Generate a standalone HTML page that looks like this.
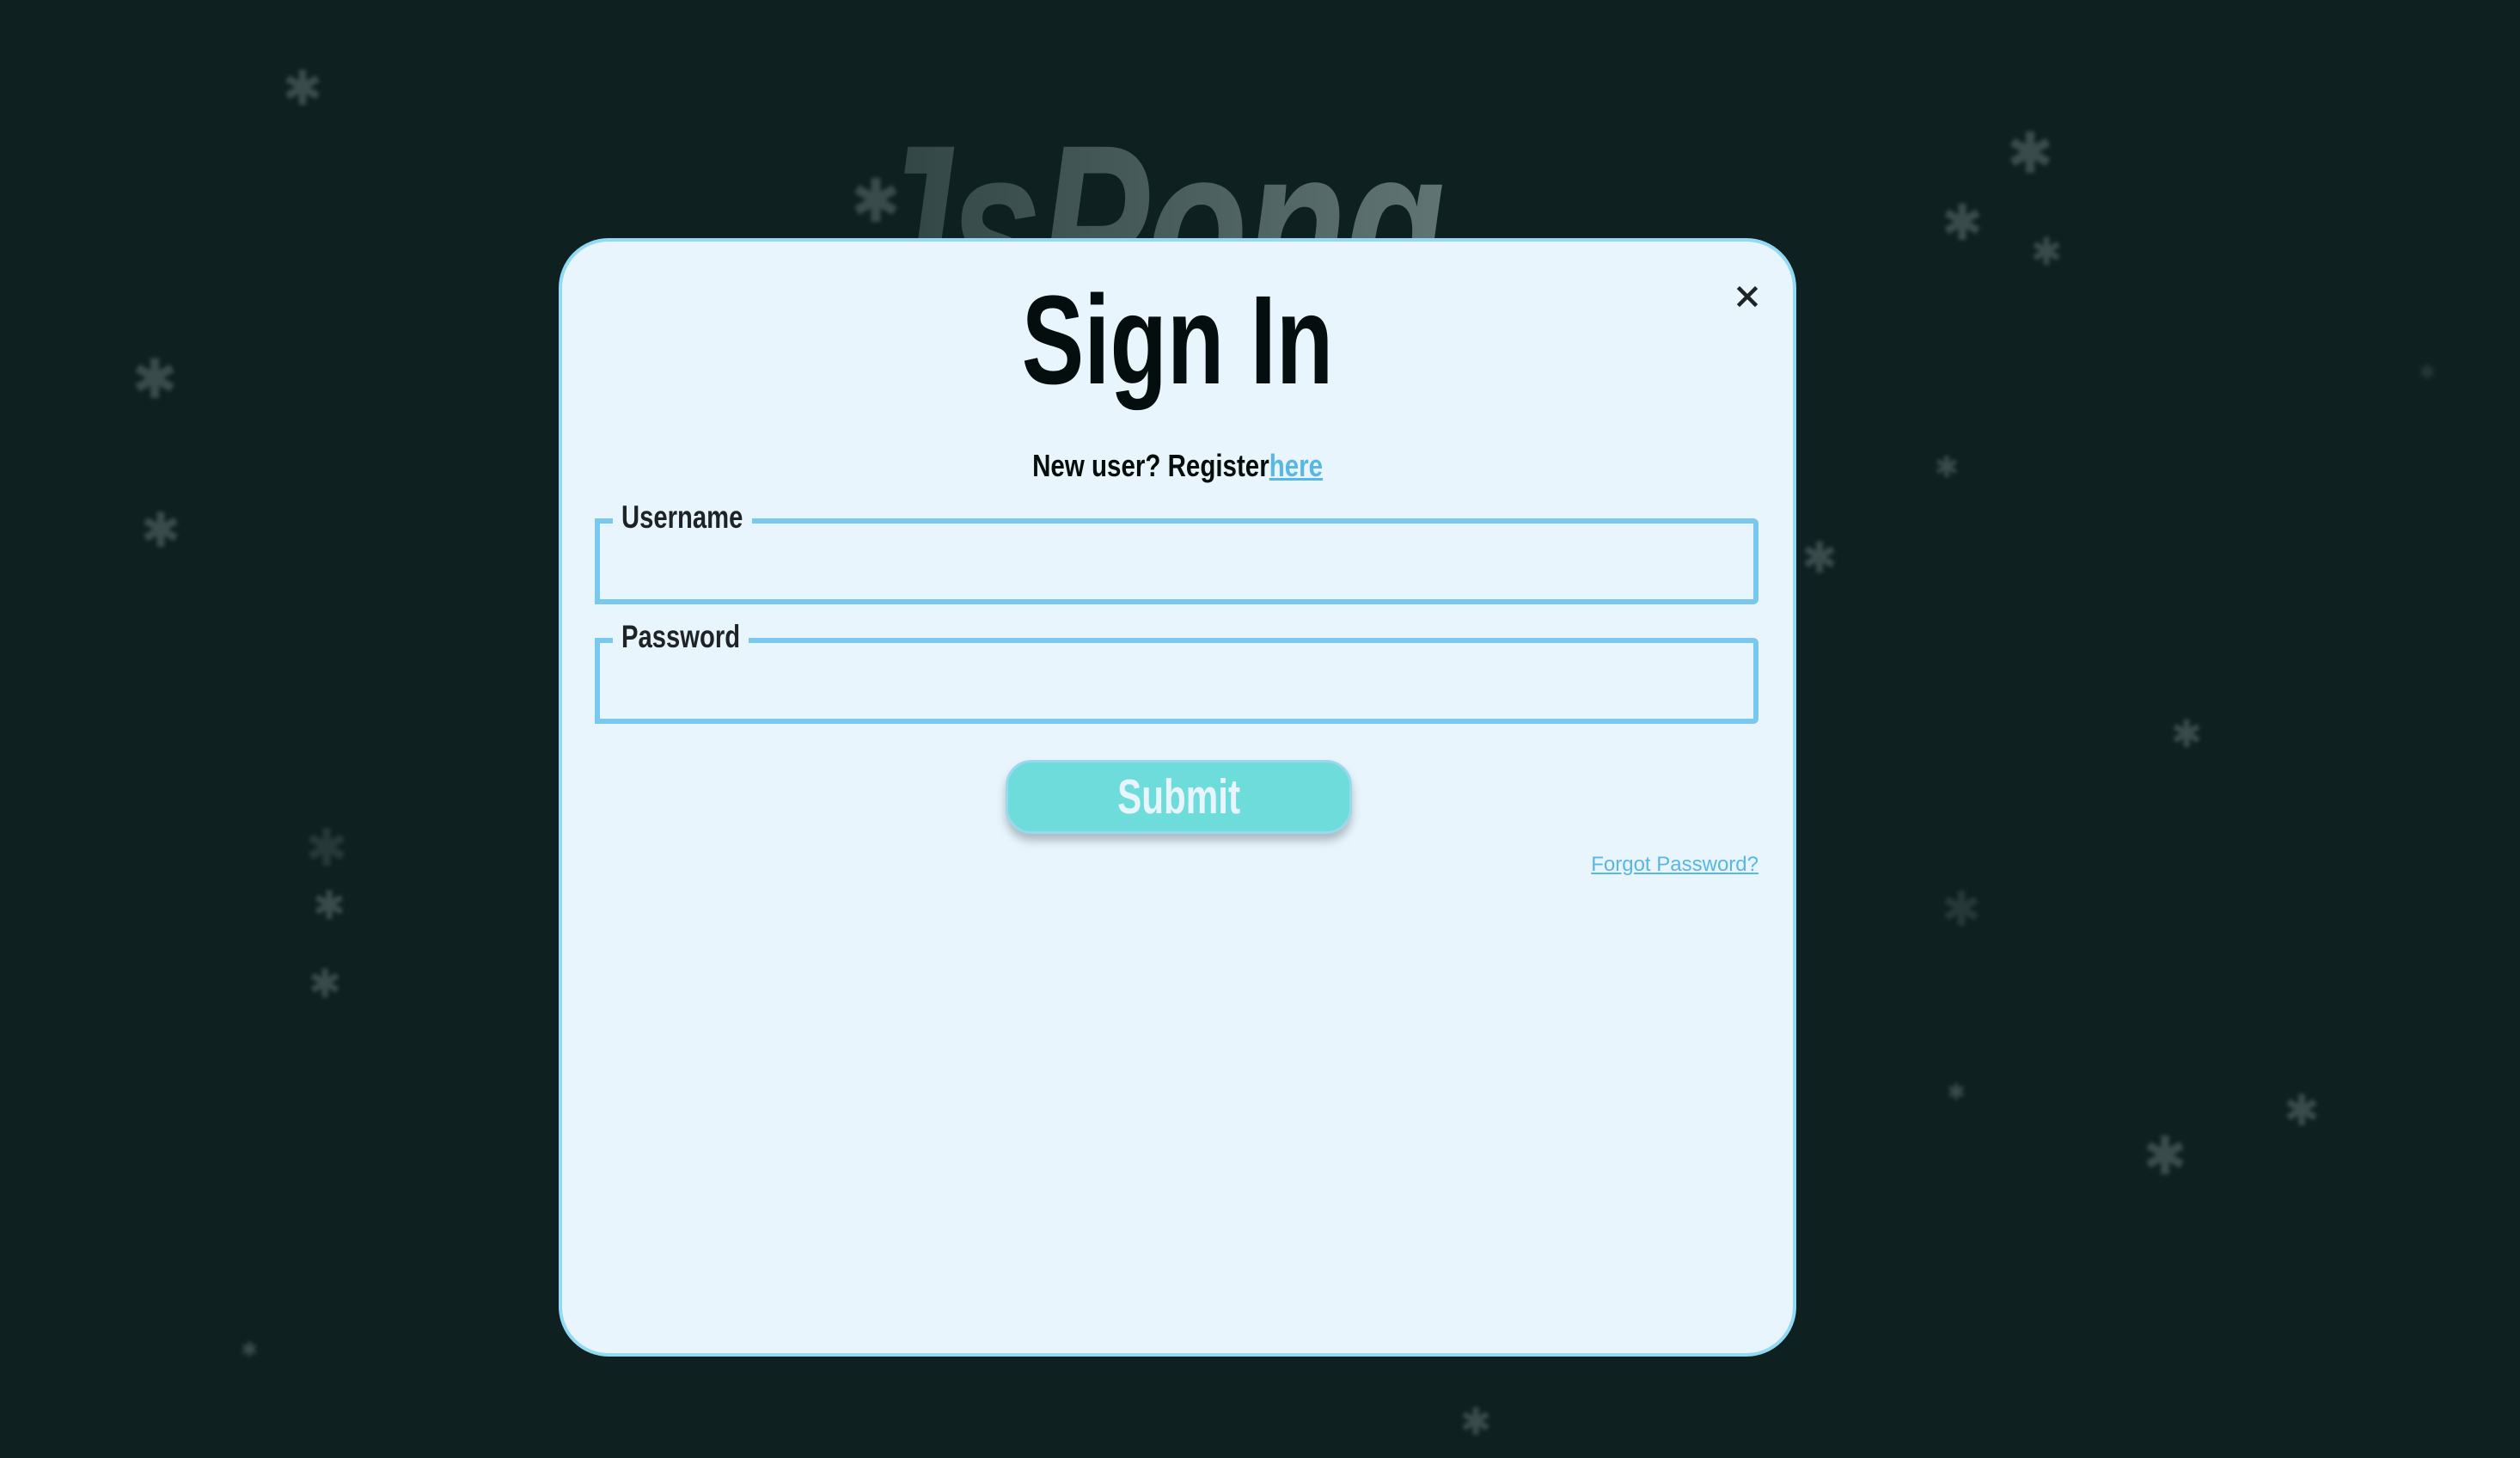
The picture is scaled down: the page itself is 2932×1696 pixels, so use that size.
<!DOCTYPE html>
<html><head><meta charset="utf-8">
<style>
html,body{margin:0;padding:0}
body{width:2932px;height:1696px;background:#0f2021;position:relative;overflow:hidden;font-family:"Liberation Sans",sans-serif}
.f{position:absolute;color:#5d6f6e;font-size:56px;line-height:1;filter:blur(2.5px);opacity:.55;transform:translate(-50%,-50%)}
.logo{position:absolute;left:1000px;top:128px;font-size:275px;line-height:1;font-weight:bold;font-style:italic;transform:scaleX(.7);transform-origin:left top;
 background:linear-gradient(90deg,#2f4342,#607573);-webkit-background-clip:text;background-clip:text;color:transparent;white-space:nowrap;letter-spacing:-4px}
.modal{position:absolute;left:650px;top:277px;width:1432px;height:1293px;background:#e8f5fc;border:4px solid #92d9f3;border-radius:58px}
.abs{position:absolute;white-space:nowrap;line-height:1}
.title{left:0;width:100%;text-align:center;top:42px;font-size:147px;font-weight:bold;color:#040e0e}
.title span,.sub span,.btn span{display:inline-block;transform-origin:center}
.sub{left:0;width:100%;text-align:center;top:243px;font-size:36px;font-weight:bold;color:#050d0d}
.sub a{color:#5ab6e3;text-decoration:underline;text-decoration-thickness:3px}
.fs{position:absolute;left:38px;width:1342px;height:88px;border:6px solid #78c9ed;border-radius:0 6px 6px 0}
.lg{position:absolute;left:15px;top:-22px;background:#e8f5fc;padding:0 0 0 10px;height:40px;overflow:visible;white-space:nowrap}
.lg span{display:inline-block;font-size:37px;font-weight:bold;color:#1f2326;transform:scaleX(.79);transform-origin:left top;line-height:1;margin-top:-4px}
.btn{position:absolute;left:516px;top:603px;width:397px;height:80px;background:#6fdcdc;border:3px solid #9ad8ee;border-radius:30px;box-shadow:0 8px 10px rgba(60,80,90,.35);text-align:center;color:#e8f5fc;font-weight:bold;font-size:57px;line-height:80px}
.forgot{right:40px;top:713px;font-size:24px;color:#5ab6e3;text-decoration:underline}
.x{position:absolute;left:1366px;top:51px;width:26px;height:26px}
</style></head><body>
<div class="logo">JsPong</div>
<div class="f" style="left:352px;top:103px">✱</div>
<div class="f" style="left:1019px;top:234px;font-size:70px">✱</div>
<div class="f" style="left:2362px;top:178px;font-size:66px">✱</div>
<div class="f" style="left:2283px;top:260px;font-size:58px">✱</div>
<div class="f" style="left:2381px;top:294px;font-size:44px">✱</div>
<div class="f" style="left:180px;top:441px;font-size:64px">✱</div>
<div class="f" style="left:187px;top:617px;font-size:56px">✱</div>
<div class="f" style="left:2117px;top:649px;font-size:50px">✱</div>
<div class="f" style="left:2265px;top:544px;font-size:34px">✱</div>
<div class="f" style="left:2544px;top:855px;font-size:44px">✱</div>
<div class="f" style="left:380px;top:987px;font-size:60px;opacity:.3">✱</div>
<div class="f" style="left:383px;top:1053px;font-size:46px">✱</div>
<div class="f" style="left:378px;top:1144px;font-size:46px">✱</div>
<div class="f" style="left:2282px;top:1058px;font-size:56px;opacity:.3">✱</div>
<div class="f" style="left:2678px;top:1292px;font-size:50px">✱</div>
<div class="f" style="left:2519px;top:1346px;font-size:62px">✱</div>
<div class="f" style="left:2276px;top:1270px;font-size:26px">✱</div>
<div class="f" style="left:1717px;top:1655px;font-size:44px">✱</div>
<div class="f" style="left:290px;top:1571px;font-size:24px">✱</div>
<div class="f" style="left:2824px;top:434px;font-size:24px;opacity:.3">✱</div>

<div class="modal">
  <div class="abs title"><span style="transform:scaleX(.74)">Sign In</span></div>
  <svg class="x" viewBox="0 0 26 26"><path d="M4 4L22 22M22 4L4 22" stroke="#1d2426" stroke-width="4.5" stroke-linecap="square"/></svg>
  <div class="abs sub"><span style="transform:scaleX(.82)">New user? Register<a>here</a></span></div>
  <div class="fs" style="top:322px"><div class="lg" style="width:152px"><span>Username</span></div></div>
  <div class="fs" style="top:461px"><div class="lg" style="width:148px"><span>Password</span></div></div>
  <div class="btn"><span style="transform:scaleX(.74)">Submit</span></div>
  <div class="abs forgot">Forgot Password?</div>
</div>
</body></html>
